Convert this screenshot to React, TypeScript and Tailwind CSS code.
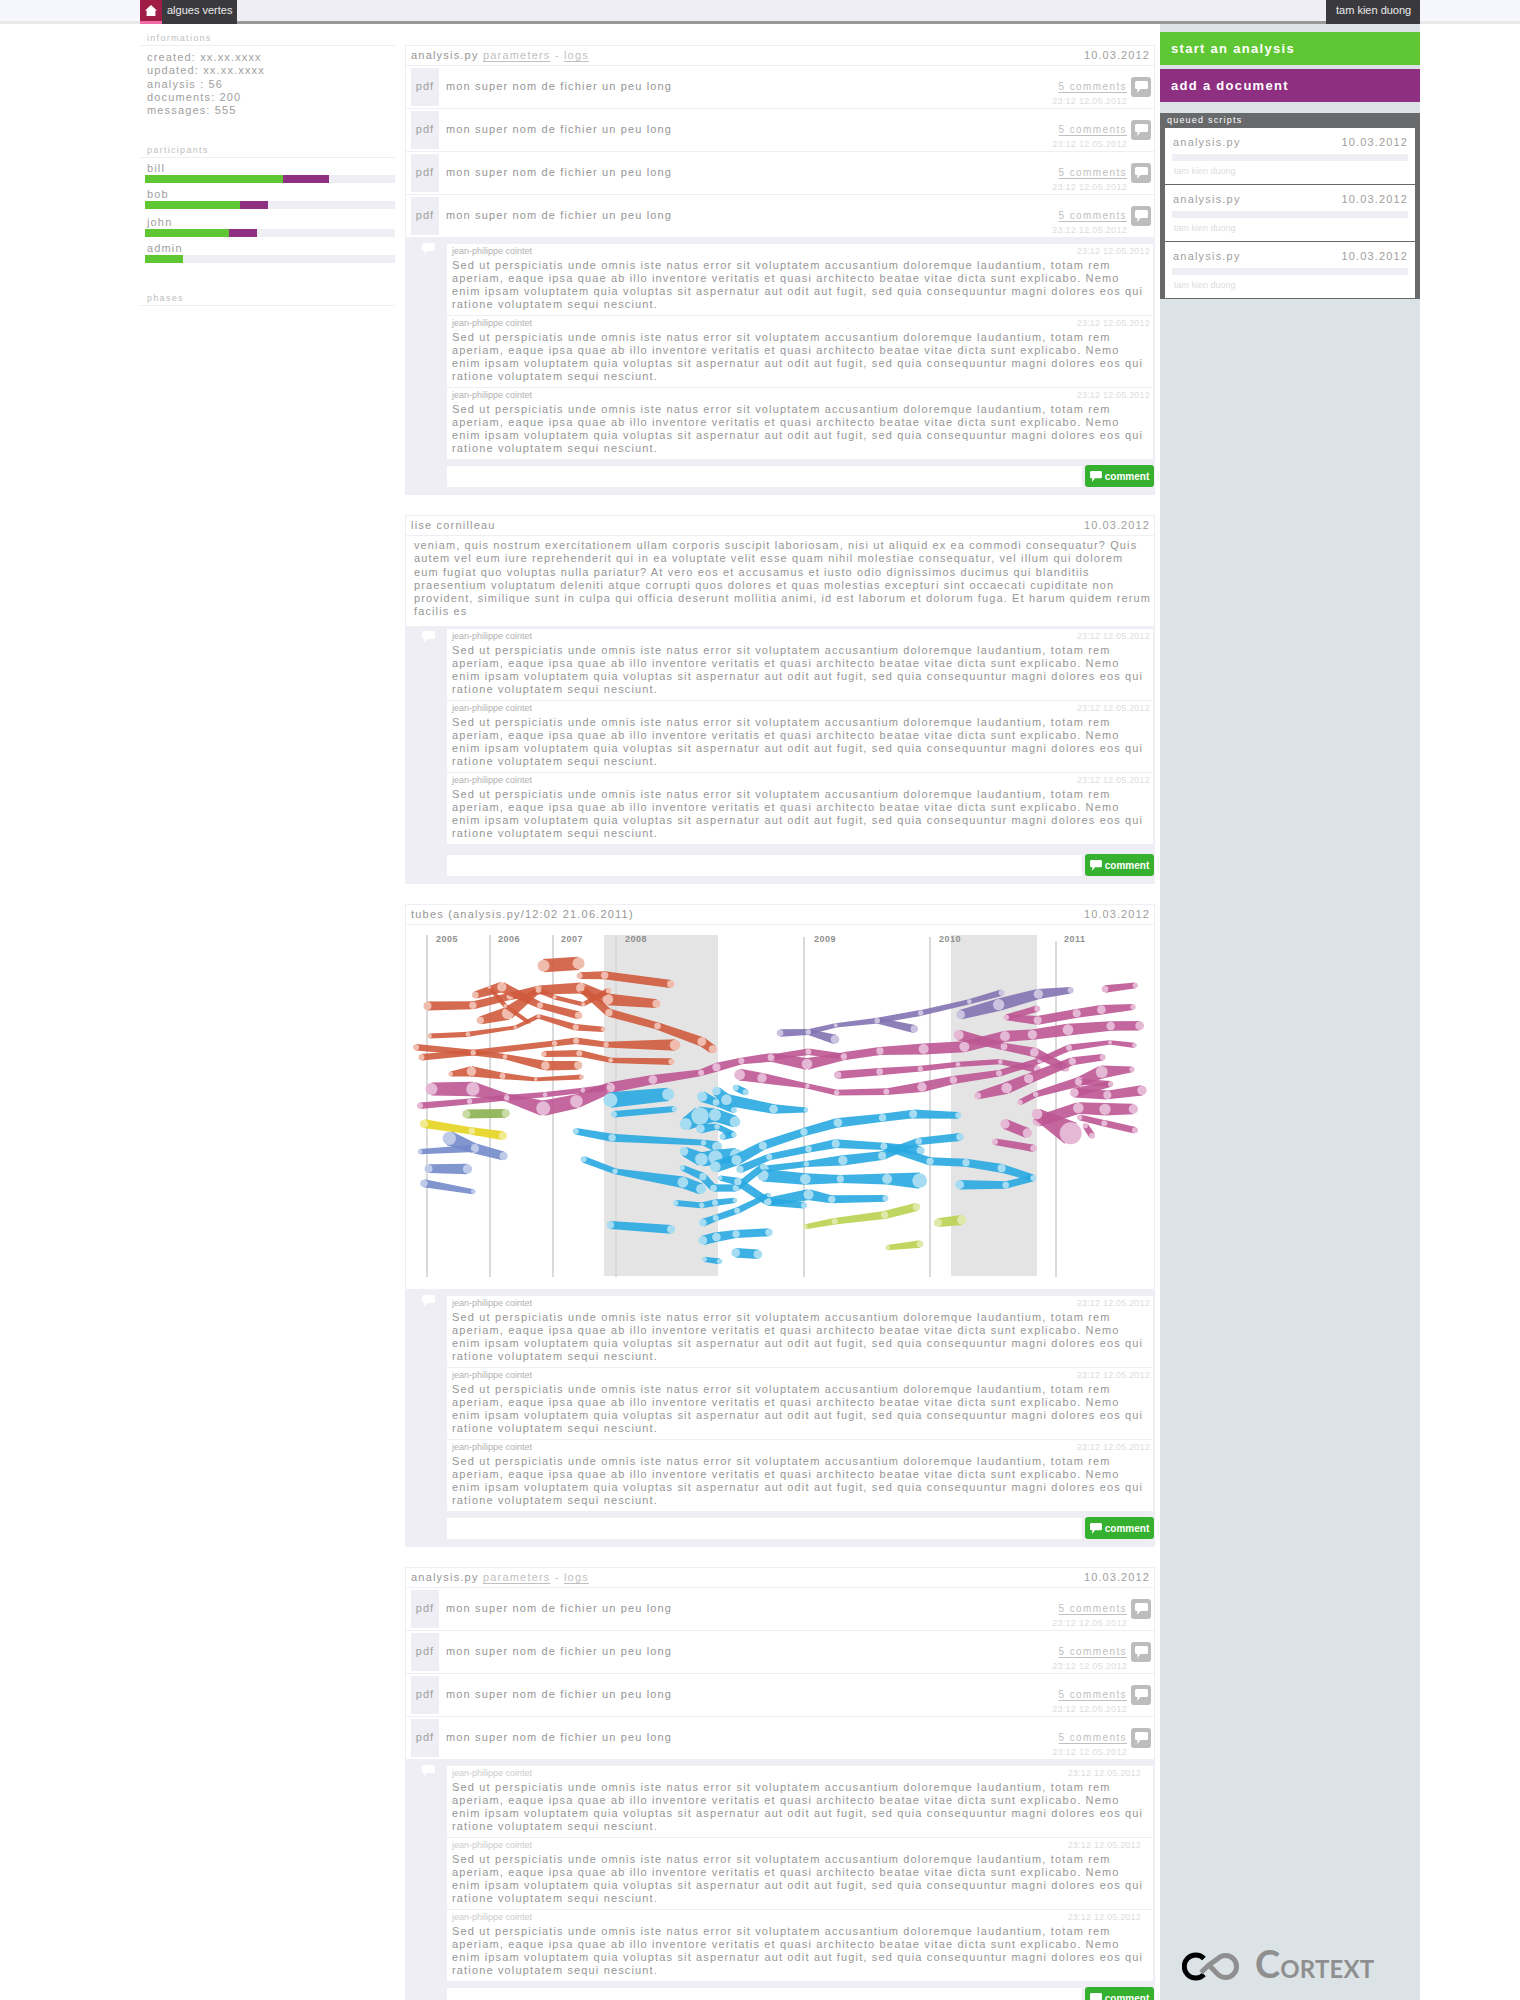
import React from 'react';

const LOREM = 'Sed ut perspiciatis unde omnis iste natus error sit voluptatem accusantium doloremque laudantium, totam rem aperiam, eaque ipsa quae ab illo inventore veritatis et quasi architecto beatae vitae dicta sunt explicabo. Nemo enim ipsam voluptatem quia voluptas sit aspernatur aut odit aut fugit, sed quia consequuntur magni dolores eos qui ratione voluptatem sequi nesciunt.';
const LISE = [
    'veniam, quis nostrum exercitationem ullam corporis suscipit laboriosam, nisi ut aliquid ex ea commodi consequatur? Quis',
    'autem vel eum iure reprehenderit qui in ea voluptate velit esse quam nihil molestiae consequatur, vel illum qui dolorem',
    'eum fugiat quo voluptas nulla pariatur? At vero eos et accusamus et iusto odio dignissimos ducimus qui blanditiis',
    'praesentium voluptatum deleniti atque corrupti quos dolores et quas molestias excepturi sint occaecati cupiditate non',
    'provident, similique sunt in culpa qui officia deserunt mollitia animi, id est laborum et dolorum fuga. Et harum quidem rerum',
    'facilis es',
];

type P = [number, number, number];
// points read off two crops of the reference, converted to page coordinates
const a = (x: number, y: number, r: number): P => [400 + x / 2.8, 900 + y / 3, r / 3];
const b = (x: number, y: number, r: number): P => [700 + x / 3, 900 + y / 3, r / 3];

const COLORS: Record<string, [string, string]> = {
    red: ['#cf5a3c', '#f0bcae'],
    mag: ['#bd5793', '#e5b8d5'],
    blue: ['#28a9e1', '#a5dcf2'],
    pur: ['#8273b3', '#cbc3e0'],
    grn: ['#8bb04f', '#c9dca6'],
    yel: ['#e5d420', '#f1ea90'],
    sla: ['#7389ca', '#bfcae8'],
    lim: ['#b9d14f', '#dfe8a8'],
};

const TUBES: [string, P[]][] = [
    ['red', [a(402, 197, 18), a(500, 190, 18)]],
    ['red', [a(503, 227, 9), a(573, 226, 11), a(758, 252, 11)]],
    ['red', [a(77, 318, 12), a(204, 316, 11), a(308, 289, 10), a(388, 270, 12), a(507, 264, 15), a(582, 298, 16), a(718, 311, 12)]],
    ['red', [a(225, 361, 11), a(302, 340, 18), a(388, 270, 8)]],
    ['red', [a(211, 285, 10), a(285, 261, 14), a(392, 316, 9), a(500, 346, 11)]],
    ['red', [a(250, 262, 5), a(295, 318, 6), a(362, 368, 5)]],
    ['red', [a(83, 408, 7), a(190, 403, 7), a(323, 382, 5), a(388, 349, 6), a(492, 382, 9), a(569, 388, 7)]],
    ['red', [a(45, 442, 9), a(205, 458, 8), a(294, 470, 7), a(407, 497, 13), a(499, 496, 12)]],
    ['red', [a(60, 472, 9), a(205, 458, 8), a(433, 430, 8), a(493, 422, 9), a(577, 434, 8), a(770, 435, 16)]],
    ['red', [a(403, 462, 8), a(502, 460, 9), a(590, 481, 7), a(760, 485, 9)]],
    ['red', [a(142, 522, 7), a(200, 514, 14), a(287, 528, 9), a(380, 538, 5), a(508, 531, 7)]],
    ['red', [a(388, 270, 8), a(433, 292, 6), a(513, 313, 6), a(584, 272, 8)]],
    ['red', [a(507, 264, 10), a(585, 338, 11), a(721, 378, 10), a(845, 425, 13), a(876, 448, 12)]],

    ['mag', [a(88, 567, 18), a(204, 567, 20), a(299, 593, 11), a(401, 625, 21), a(494, 604, 19), a(588, 563, 15), a(708, 539, 13), a(843, 518, 9), a(886, 502, 12), b(124, 483, 9), b(215, 472, 12), b(321, 492, 16), b(430, 469, 11), b(540, 453, 11), b(671, 447, 15), b(793, 440, 15), b(915, 409, 15), b(997, 404, 14), b(1104, 389, 16), b(1232, 378, 13), b(1319, 377, 13)]],
    ['mag', [b(215, 472, 8), b(325, 455, 9), b(430, 469, 8)]],
    ['mag', [a(56, 617, 9), a(195, 604, 8), a(299, 593, 8), a(406, 584, 7), a(512, 571, 7), a(588, 563, 10)]],
    ['mag', [b(119, 524, 16), b(186, 534, 14), b(322, 558, 7), b(410, 578, 8), b(559, 575, 9), b(666, 561, 14), b(760, 540, 11), b(897, 520, 9), b(1020, 482, 8), b(1107, 443, 9), b(1230, 427, 6), b(1303, 436, 7)]],
    ['mag', [b(413, 525, 11), b(539, 515, 10), b(661, 506, 8), b(774, 493, 7), b(901, 485, 7), b(1012, 508, 10)]],
    ['mag', [b(776, 405, 15), b(912, 440, 10), b(1003, 457, 13), b(1098, 505, 10)]],
    ['mag', [b(1215, 267, 10), b(1306, 256, 8)]],
    ['mag', [b(919, 352, 8), b(1012, 326, 9)]],
    ['mag', [b(919, 352, 8), b(1013, 361, 12), b(1130, 340, 12), b(1204, 329, 13), b(1299, 321, 8)]],
    ['mag', [b(833, 587, 10), b(920, 564, 16), b(986, 536, 14), b(1117, 484, 11), b(1208, 472, 9)]],
    ['mag', [b(960, 607, 8), b(1007, 583, 8), b(1138, 545, 13), b(1205, 516, 18), b(1296, 508, 8)]],
    ['mag', [b(1138, 545, 8), b(1232, 552, 8), b(1123, 578, 13), b(1222, 585, 12), b(1326, 571, 14)]],
    ['mag', [b(1013, 664, 15), b(1135, 624, 16), b(1215, 628, 17), b(1300, 627, 14)]],
    ['mag', [b(1011, 642, 16), b(1112, 700, 33)]],
    ['mag', [b(1139, 652, 8), b(1213, 670, 9), b(1305, 691, 9)]],
    ['mag', [b(1156, 677, 8), b(1176, 707, 9)]],
    ['mag', [b(915, 672, 14), b(982, 699, 14)]],
    ['mag', [b(885, 725, 9), b(1001, 745, 10)]],

    ['pur', [b(240, 399, 10), b(325, 396, 8), b(407, 376, 6), b(532, 362, 8), b(662, 339, 8), b(808, 305, 7), b(905, 278, 9)]],
    ['pur', [b(325, 396, 8), b(405, 418, 13)]],
    ['pur', [b(532, 362, 8), b(643, 387, 11)]],
    ['pur', [b(782, 344, 13), b(896, 314, 17), b(1015, 282, 14), b(1112, 271, 9)]],

    ['blue', [a(589, 600, 21), a(751, 583, 18)]],
    ['blue', [a(599, 643, 9), a(768, 627, 8)]],
    ['blue', [a(492, 694, 9), a(594, 713, 11), a(850, 728, 8), a(888, 740, 15)]],
    ['blue', [a(514, 778, 9), a(602, 814, 8), a(792, 847, 16), a(843, 867, 15)]],
    ['blue', [a(589, 975, 11), a(759, 988, 12)]],
    ['blue', [a(846, 590, 15), a(885, 607, 10), a(935, 630, 9)]],
    ['blue', [a(886, 573, 13), a(914, 599, 16), a(1046, 627, 13), a(1137, 630, 7)]],
    ['blue', [a(940, 563, 9), a(968, 577, 9)]],
    ['blue', [a(800, 672, 18), a(840, 648, 26), a(882, 645, 18), a(938, 665, 16)]],
    ['blue', [a(841, 686, 13), a(888, 680, 8), a(935, 704, 8), a(903, 710, 9)]],
    ['blue', [a(795, 754, 13), a(844, 778, 19), a(883, 772, 21), a(942, 765, 19)]],
    ['blue', [a(883, 800, 16), a(942, 780, 15), a(1016, 737, 12), a(1131, 696, 11), a(1226, 668, 13), a(1351, 653, 11), a(1437, 642, 12), b(775, 646, 9)]],
    ['blue', [a(952, 808, 11), a(1034, 771, 9), a(1144, 747, 10), a(1220, 731, 12), a(1355, 739, 10), b(662, 752, 12)]],
    ['blue', [a(1024, 806, 9), a(1138, 792, 8), a(1240, 781, 14), a(1350, 767, 12), b(656, 724, 10), b(780, 711, 11)]],
    ['blue', [a(1016, 826, 17), a(1135, 837, 16), a(1233, 837, 11), a(1364, 837, 15), a(1455, 842, 22)]],
    ['blue', [a(790, 803, 8), a(848, 830, 11), a(878, 864, 10), a(941, 864, 10), a(1016, 800, 9)]],
    ['blue', [a(896, 834, 7), a(946, 845, 11), a(1030, 905, 11), a(1131, 916, 9)]],
    ['blue', [a(1030, 905, 11), a(1144, 884, 15), a(1209, 898, 11), a(1359, 895, 9)]],
    ['blue', [a(772, 909, 8), a(845, 916, 8), a(882, 908, 9), a(938, 901, 7)]],
    ['blue', [a(848, 968, 11), a(884, 954, 9), a(944, 932, 9), a(1033, 885, 7)]],
    ['blue', [a(848, 1021, 13), a(886, 1011, 13), a(941, 1002, 11), a(1033, 997, 11)]],
    ['blue', [a(940, 1058, 13), a(1002, 1063, 13)]],
    ['blue', [a(853, 1078, 7), a(895, 1084, 8)]],
    ['blue', [a(1355, 739, 10), b(690, 784, 11), b(798, 788, 11), b(905, 805, 12), b(1000, 834, 9), b(917, 855, 10), b(779, 854, 13)]],

    ['lim', [a(1135, 980, 7), a(1217, 964, 9), a(1357, 945, 11), a(1446, 921, 11)]],
    ['lim', [b(714, 968, 12), b(785, 960, 14)]],
    ['lim', [b(563, 1043, 7), b(660, 1032, 10)]],
    ['grn', [a(186, 642, 12), a(296, 640, 12)]],
    ['yel', [a(67, 671, 12), a(201, 693, 10), a(288, 707, 12)]],
    ['sla', [a(138, 715, 20), a(208, 745, 14), a(290, 768, 12)]],
    ['sla', [a(56, 755, 7), a(208, 745, 10)]],
    ['sla', [a(80, 806, 12), a(189, 807, 14)]],
    ['sla', [a(67, 850, 11), a(205, 875, 7)]],
];

function Tube({ color, points }: { color: string; points: P[] }) {
    const [fill, node] = COLORS[color];
    return (
        <g>
            {points.slice(1).map((p, i) => {
                const q = points[i];
                const dx = p[0] - q[0];
                const dy = p[1] - q[1];
                const len = Math.hypot(dx, dy) || 1;
                const nx = -dy / len;
                const ny = dx / len;
                const h1 = q[2] * 1.1;
                const h2 = p[2] * 1.1;
                const pts = [
                    [q[0] + nx * h1, q[1] + ny * h1],
                    [p[0] + nx * h2, p[1] + ny * h2],
                    [p[0] - nx * h2, p[1] - ny * h2],
                    [q[0] - nx * h1, q[1] - ny * h1],
                ].map((c) => c.join(',')).join(' ');
                return <polygon key={i} points={pts} fill={fill} fillOpacity={0.9} />;
            })}
            {points.map((p, i) => (
                <circle key={i} cx={p[0]} cy={p[1]} r={p[2]} fill={node} />
            ))}
        </g>
    );
}

function TubesChart() {
    const years: [string, number, number, number][] = [
        ['2005', 427, 436, 935],
        ['2006', 490, 498, 935],
        ['2007', 553, 561, 935],
        ['2008', 616, 625, 935],
        ['2009', 804, 814, 937],
        ['2010', 930, 939, 937],
        ['2011', 1056, 1064, 941],
    ];
    return (
        <svg className="block w-[748px] h-[364px]" viewBox="406 925 748 364">
            <rect x="604" y="935" width="114" height="341" fill="#e4e4e4" />
            <rect x="951" y="935" width="86" height="341" fill="#e4e4e4" />
            {years.map(([label, x, tx, top]) => (
                <g key={label}>
                    <rect x={x - 1} y={top} width="2" height={1277 - top} fill="#dadada" />
                    <text x={tx} y="942" fontSize="9" fontWeight="700" fill="#8f8f8f" letterSpacing="0.5" fontFamily="'Liberation Sans', sans-serif">{label}</text>
                </g>
            ))}
            {TUBES.map(([c, pts], i) => (
                <Tube key={i} color={c} points={pts} />
            ))}
        </svg>
    );
}

function Bubble({ className, fill = '#fff' }: { className?: string; fill?: string }) {
    return (
        <svg className={className} viewBox="0 0 13 12">
            <path d="M1.5 0h10A1.5 1.5 0 0 1 13 1.5v5A1.5 1.5 0 0 1 11.5 8H5.5L2 12l.6-4H1.5A1.5 1.5 0 0 1 0 6.5v-5A1.5 1.5 0 0 1 1.5 0z" fill={fill} />
        </svg>
    );
}

function FileRow({ last }: { last?: boolean }) {
    return (
        <div className={`flex pl-[5px] pt-[2px] ${last ? 'h-[42px]' : 'h-[43px] border-b border-[#eeeef4]'}`}>
            <div className="w-[28px] h-[38px] pb-px bg-[#eeeef4] flex items-center justify-center text-[11px] tracking-[1px] text-[#a0a0a0]">pdf</div>
            <div className="ml-[7px] h-[38px] pb-px flex items-center text-[11px] tracking-[1.15px] text-[#969696]">mon super nom de fichier un peu long</div>
            <div className="ml-auto flex items-start pr-[3px]">
                <div className="flex flex-col items-end mr-[4px] pt-[13px]">
                    <span className="text-[10px] leading-[12px] tracking-[1.4px] text-[#c0c0c0] underline underline-offset-2">5 comments</span>
                    <span className="text-[9px] leading-[13px] mt-[2px] text-[#ddd] tracking-[0.3px]">23:12 12.05.2012</span>
                </div>
                <div className="w-[20px] h-[20px] mt-[9px] rounded-[3px] bg-[#bdbdbd] flex items-center justify-center">
                    <Bubble className="w-[13px] h-[12px]" />
                </div>
            </div>
        </div>
    );
}

function Comment({ faded }: { faded?: boolean }) {
    return (
        <div className="h-[72px] bg-white border-b border-[#eeeef4] pl-[5px] pr-[3px] pt-px mr-px">
            <div className="flex justify-between h-[14px] items-center text-[9px]">
                <span className={faded ? 'text-[#ccc]' : 'text-[#b0b0b0]'}>jean-philippe cointet</span>
                <span className={`text-[#ddd] tracking-[0.2px] ${faded ? 'pr-[9px]' : ''}`}>23:12 12.05.2012</span>
            </div>
            <p className="text-[11px] leading-[13px] tracking-[1.15px] text-[#969696] w-[695px]">{LOREM}</p>
        </div>
    );
}

function Discussion({ faded, tight }: { faded?: boolean; tight?: boolean }) {
    return (
        <div className={`bg-[#eeeef4] pb-[8px] pl-[41px] relative ${tight ? 'pt-[3px]' : 'pt-[7px]'}`}>
            <Bubble className={`absolute left-[16px] w-[13px] h-[12px] ${tight ? 'top-[5px]' : 'top-[6px]'}`} />
            <Comment faded={faded} />
            <Comment faded={faded} />
            <Comment faded={faded} />
            <div className={`flex justify-between h-[22px] ${tight ? 'mt-[9px]' : 'mt-[5px]'}`}>
                <div className="w-[635px] mt-px h-[21px] bg-white" />
                <button className="w-[69px] h-[22px] rounded-[3px] bg-[#36b02f] flex items-center justify-center gap-[3px] text-white text-[10px] font-bold">
                    <Bubble className="w-[12px] h-[11px]" />
                    comment
                </button>
            </div>
        </div>
    );
}

function Card({ head, children }: { head: React.ReactNode; children: React.ReactNode }) {
    return (
        <section className="mb-[20px] border-t border-x border-[#eeeef4]">
            <div className="h-[20px] border-b border-[#eeeef4] flex items-center justify-between pl-[5px] pr-[4px] text-[11px] tracking-[1.2px] text-[#969696]">
                <span>{head}</span>
                <span className="tracking-[1.1px] text-[#a0a0a0]">10.03.2012</span>
            </div>
            {children}
        </section>
    );
}

const analysisHead = (
    <>
        analysis.py{' '}
        <span className="text-[#c0c0c0] underline underline-offset-2">parameters</span>{' '}
        <span className="text-[#c0c0c0]">-</span>{' '}
        <span className="text-[#c0c0c0] underline underline-offset-2">logs</span>
    </>
);

function AnalysisCard({ faded }: { faded?: boolean }) {
    return (
        <Card head={analysisHead}>
            <FileRow />
            <FileRow />
            <FileRow />
            <FileRow last />
            <Discussion faded={faded} />
        </Card>
    );
}

const PEOPLE = [
    { name: 'bill', green: 138, purple: 46, top: 'pt-0' },
    { name: 'bob', green: 95, purple: 28, top: 'pt-0' },
    { name: 'john', green: 84, purple: 28, top: 'pt-[2px]' },
    { name: 'admin', green: 38, purple: 0, top: 'pt-0' },
];

function Sidebar() {
    return (
        <aside className="w-[255px] shrink-0 pt-[8px]">
            <h3 className="h-[14px] pl-[7px] border-b border-[#eeeef4] text-[9px] leading-[12px] tracking-[1.3px] text-[#c0c0c0] font-normal">informations</h3>
            <div className="pl-[7px] pt-[5px] text-[11px] leading-[13.3px] tracking-[1.15px] text-[#a0a0a0]">
                <div>created: xx.xx.xxxx</div>
                <div>updated: xx.xx.xxxx</div>
                <div>analysis : 56</div>
                <div>documents: 200</div>
                <div>messages: 555</div>
            </div>
            <h3 className="h-[14px] mt-[27px] pl-[7px] border-b border-[#eeeef4] text-[9px] leading-[12px] tracking-[1.3px] text-[#c0c0c0] font-normal">participants</h3>
            <div className="pl-[5px] pt-[3px]">
                {PEOPLE.map((p) => (
                    <div key={p.name} className={p.top}>
                        <div className="h-[14px] pl-[2px] text-[11px] leading-[15px] tracking-[1.15px] text-[#a0a0a0]">{p.name}</div>
                        <div className="h-[8px] mb-[4px] bg-[#eeeef4] flex">
                            <div className="bg-[#5fc734]" style={{ width: p.green }} />
                            <div className="bg-[#8f2f82]" style={{ width: p.purple }} />
                        </div>
                    </div>
                ))}
            </div>
            <h3 className="h-[14px] mt-[29px] pl-[7px] border-b border-[#eeeef4] text-[9px] leading-[12px] tracking-[1.3px] text-[#c0c0c0] font-normal">phases</h3>
        </aside>
    );
}

function QueuedRow() {
    return (
        <div className="h-[56px] mb-px bg-white px-[7px] pt-[6px]">
            <div className="flex justify-between text-[11px] leading-[16px] tracking-[1.2px] text-[#a0a0a0] pl-px">
                <span>analysis.py</span>
                <span className="tracking-[1.15px]">10.03.2012</span>
            </div>
            <div className="h-[7px] mt-[4px] bg-[#eeeef4]" />
            <div className="text-[9px] leading-[14px] mt-[3px] pl-[2px] text-[#ddd]">tam kien duong</div>
        </div>
    );
}

function CortextLogo() {
    return (
        <div className="mt-auto mb-[18px] ml-[22px] flex items-end gap-[13px]" style={{ fontFamily: 'Lato, sans-serif' }}>
            <svg className="w-[60px] h-[29px] mb-px" viewBox="0 0 60 29">
                <path d="M22 6.5A11.5 11.5 0 1 0 22 22.5" fill="none" stroke="#000" strokeWidth="5" />
                <path d="M19 20.5L27 13L36 6.5A11 11 0 1 1 36 22.5L26 12" fill="none" stroke="#8f8f8f" strokeWidth="5" />
            </svg>
            <div className="flex items-baseline font-bold text-[#8f8f8f] leading-none">
                <span className="text-[38px]">C</span>
                <span className="text-[24px] tracking-[0.2px]">ORTEXT</span>
            </div>
        </div>
    );
}

function RightPanel() {
    return (
        <aside className="ml-[5px] w-[260px] h-[1976px] shrink-0 bg-[#dbe3e6] flex flex-col pt-[8px]">
            <div className="h-[33px] bg-[#5fc734] flex items-center pl-[11px] text-[13px] font-bold tracking-[1.3px] text-white">start an analysis</div>
            <div className="h-[33px] mt-[4px] pt-px bg-[#8f2f82] flex items-center pl-[11px] text-[13px] font-bold tracking-[1.3px] text-white">add a document</div>
            <div className="mt-[11px] bg-[#68696b] px-[5px]">
                <div className="h-[15px] pl-[2px] text-[9px] leading-[15px] tracking-[1.2px] text-white">queued scripts</div>
                <QueuedRow />
                <QueuedRow />
                <QueuedRow />
            </div>
            <CortextLogo />
        </aside>
    );
}

export default function App() {
    return (
        <div className="h-[2000px] overflow-hidden bg-white" style={{ fontFamily: "'Liberation Sans', Arial, sans-serif" }}>
            <header className="h-[24px] bg-[#f6f7fd] border-b-[3px] border-[#e9e9e9]">
                <div className="w-[1280px] h-[24px] ml-[140px] bg-[#eeeef4] border-b-[3px] border-[#999] flex justify-between">
                    <div className="flex h-[24px]">
                        <div className="w-[22px] h-[24px] bg-[#9f1d47] border-b-[3px] border-[#f06aa8] flex items-center justify-center">
                            <svg className="w-[12px] h-[11px]" viewBox="0 0 12 11">
                                <path d="M6 0l6 5.5h-1.6V11H1.6V5.5H0z" fill="#fff" />
                            </svg>
                        </div>
                        <div className="w-[75px] h-[24px] bg-[#3a3a3e] pl-[5px] text-[11px] leading-[21px] text-white/90">algues vertes</div>
                    </div>
                    <div className="w-[94px] h-[24px] bg-[#3a3a3e] pl-[10px] text-[11px] leading-[21px] text-white/90">tam kien duong</div>
                </div>
            </header>
            <div className="w-[1280px] ml-[140px] flex">
                <Sidebar />
                <main className="ml-[10px] w-[750px] shrink-0 pt-[21px]">
                    <AnalysisCard />
                    <Card head="lise cornilleau">
                        <div className="h-[90px] pl-[8px] pt-[3px] text-[11px] leading-[13.3px] tracking-[1.12px] text-[#969696] whitespace-nowrap">
                            {LISE.map((line) => (
                                <div key={line}>{line}</div>
                            ))}
                        </div>
                        <Discussion tight />
                    </Card>
                    <Card head="tubes (analysis.py/12:02 21.06.2011)">
                        <TubesChart />
                        <Discussion />
                    </Card>
                    <AnalysisCard faded />
                </main>
                <RightPanel />
            </div>
        </div>
    );
}
